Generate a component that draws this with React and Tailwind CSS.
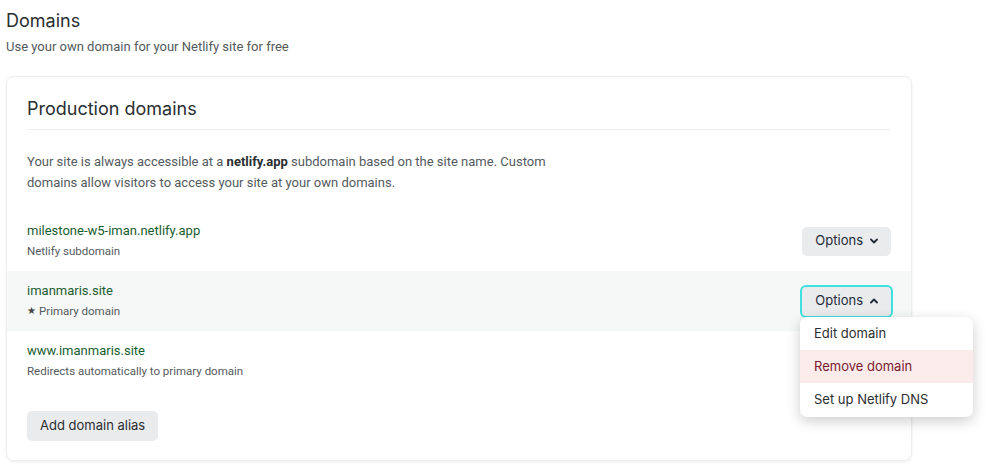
import React from 'react';

const head = { fontFamily: 'Inter, "Noto Sans", sans-serif' };

const Chevron = ({ up }) => (
    <svg width="8" height="6" viewBox="0 0 8 6" className="ml-[7px]">
        <path
            d={up ? 'M1 4.5 L4 1.5 L7 4.5' : 'M1 1.5 L4 4.5 L7 1.5'}
            fill="none"
            stroke="#1f2937"
            strokeWidth="1.8"
            strokeLinecap="round"
            strokeLinejoin="round"
        />
    </svg>
);

const DomainRow = ({ name, note, star, highlight, children }) => (
    <div className={`relative flex items-center justify-between px-5 h-[60px] ${highlight ? 'bg-[#f6f8f7]' : ''}`}>
        <div className="flex flex-col">
            <span className="text-[13px] text-[#1a5d2f] leading-[20px]">{name}</span>
            <span className="text-[11.5px] text-[#545a5e] leading-[20px] flex items-center">
                {star && <span className="text-[10px] mr-[3px] text-[#444]">★</span>}
                {note}
            </span>
        </div>
        {children}
    </div>
);

export default function App() {
    return (
        <div className="bg-white min-h-[473px] w-[1004px] px-[6px] pt-[9px]" style={{ fontFamily: 'Roboto, "Open Sans", sans-serif' }}>
            <h1 className="text-[18px] leading-[24px] text-[#2a2e31]" style={head}>Domains</h1>
            <p className="text-[13px] leading-[20px] text-[#545a5e] mt-[4px]">Use your own domain for your Netlify site for free</p>

            <div className="mt-[19px] w-[906px] rounded-[8px] border border-[#eceeef] shadow-[0_1px_3px_rgba(0,0,0,0.08)] pt-[19px] pb-[19px]">
                <div className="mx-5">
                    <h2 className="text-[18px] leading-[26px] text-[#2a2e31] pb-[7px] border-b border-[#eceeef]" style={head}>Production domains</h2>
                    <p className="mt-[21px] text-[13px] leading-[21px] text-[#545a5e] w-[530px]">
                        Your site is always accessible at a <b className="font-bold text-[#2a2e31]">netlify.app</b> subdomain based on the site name. Custom domains allow visitors to access your site at your own domains.
                    </p>
                </div>

                <div className="mt-[18px] flex flex-col">
                    <DomainRow name="milestone-w5-iman.netlify.app" note="Netlify subdomain">
                        <button className="flex items-center h-[29px] px-[13px] rounded-[5px] bg-[#e9ebed] text-[13px] text-[#1f2937]" style={head}>
                            Options <Chevron />
                        </button>
                    </DomainRow>
                    <DomainRow name="imanmaris.site" note="Primary domain" star highlight>
                        <button className="flex items-center h-[33px] px-[13px] rounded-[6px] bg-[#e9ebed] border-2 border-[#3ee0e0] text-[13px] text-[#1f2937] -mr-[2px]" style={head}>
                            Options <Chevron up />
                        </button>
                        <div className="absolute right-[-62px] top-[46px] z-10 w-[173px] rounded-[7px] bg-white shadow-[0_4px_14px_rgba(0,0,0,0.2)] overflow-hidden text-[13px] text-[#2a2e31]" style={head}>
                            <div className="h-[33px] flex items-center px-[14px]">Edit domain</div>
                            <div className="h-[33px] flex items-center px-[14px] bg-[#fbeceb] text-[#7a1a30]">Remove domain</div>
                            <div className="h-[34px] flex items-center px-[14px]">Set up Netlify DNS</div>
                        </div>
                    </DomainRow>
                    <DomainRow name="www.imanmaris.site" note="Redirects automatically to primary domain" />
                </div>

                <div className="mx-5 mt-[20px]">
                    <button className="h-[30px] px-[13px] rounded-[5px] bg-[#e9ebed] text-[13px] text-[#2a2e31]" style={head}>
                        Add domain alias
                    </button>
                </div>
            </div>
        </div>
    );
}
